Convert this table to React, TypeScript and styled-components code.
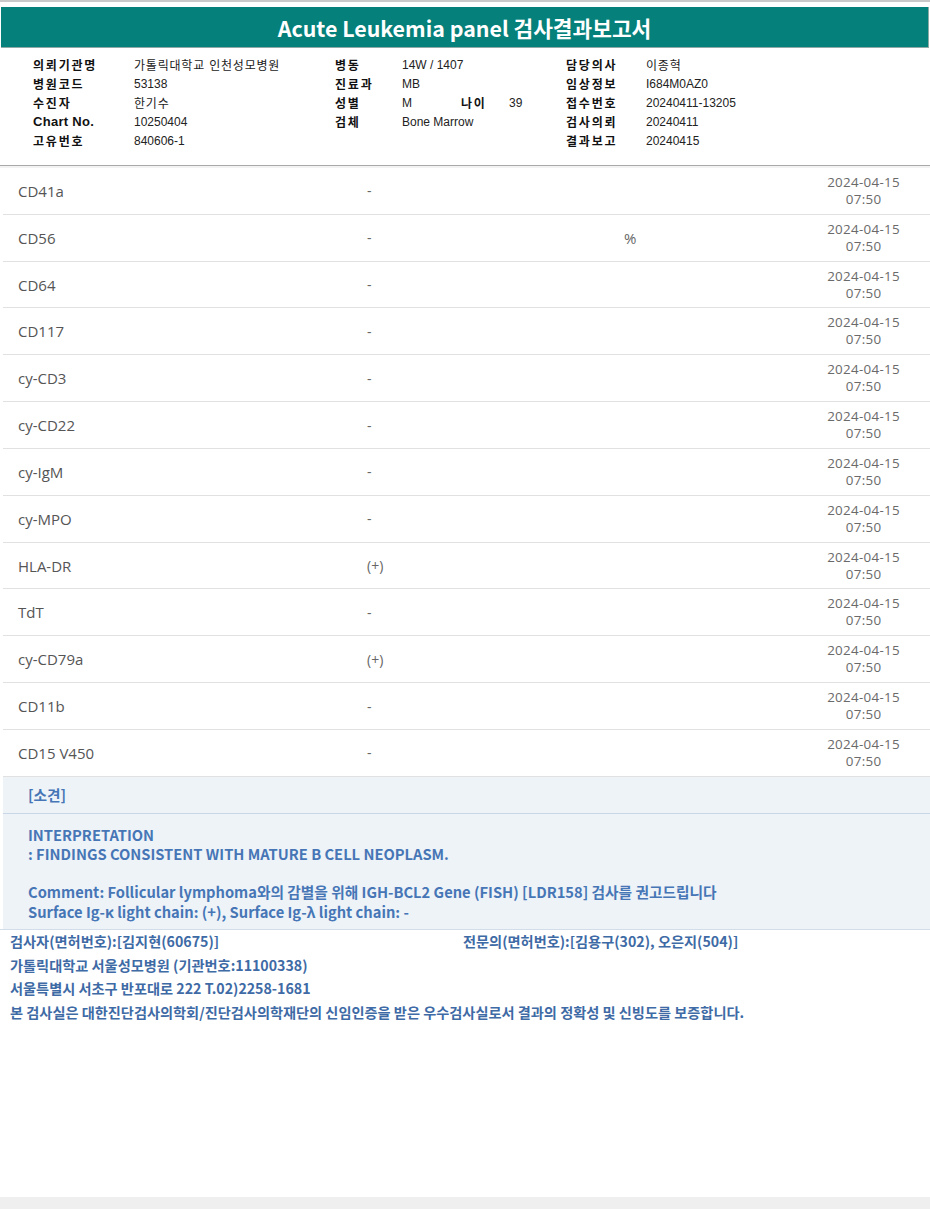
import styled, { createGlobalStyle } from 'styled-components';

const GlobalStyle = createGlobalStyle`
  html, body {
    margin: 0;
    padding: 0;
    background: #efefef;
  }
  * { box-sizing: border-box; }
`;

const KR = `'Noto Sans CJK KR', 'Liberation Sans', sans-serif`;
const OPEN = `'Open Sans', 'Noto Sans CJK KR', sans-serif`;

const Page = styled.div`
  width: 930px;
  height: 1197px;
  background: white;
  border-top: 2px solid #c9c9c9;
  padding-top: 5px;
`;

const TitleBar = styled.div`
  height: 41px;
  margin-left: 1px;
  margin-right: 1px;
  background: #05807a;
  border-right: 1px solid #8fa9a7;
  border-bottom: 1px solid #8fa9a7;
  display: flex;
  align-items: center;
  justify-content: center;
  color: white;
  font-family: ${KR};
  font-weight: 700;
  font-size: 21.4px;
`;

const Info = styled.div`
  display: grid;
  grid-template-columns: 101px 201px 67px 59px 48px 57px 80px 1fr;
  grid-auto-rows: 19px;
  align-items: center;
  padding: 7px 0 15px 33px;
  border-bottom: 1px solid #a9a9a9;
  color: #111;
`;

const Label = styled.div<{ $latin?: boolean }>`
  font-family: ${p => (p.$latin ? `'Liberation Sans', 'Noto Sans CJK KR', sans-serif` : KR)};
  font-weight: 700;
  font-size: ${p => (p.$latin ? '13px' : '12px')};
  letter-spacing: ${p => (p.$latin ? '0.3px' : '1.8px')};
  white-space: nowrap;
`;

const Value = styled.div<{ $span?: number; $kr?: boolean }>`
  font-family: 'Liberation Sans', 'Noto Sans CJK KR', sans-serif;
  font-size: 12px;
  letter-spacing: ${p => (p.$kr ? '0.8px' : '0')};
  color: #222;
  white-space: nowrap;
  grid-column: span ${p => p.$span ?? 1};
`;

const Gap = styled.div`
  height: 2px;
  background: #f3f3f3;
`;

const Table = styled.div`
  margin-left: 3px;
`;

const Row = styled.div`
  display: grid;
  grid-template-columns: 349px 257px 1fr auto;
  align-items: center;
  height: 46.83px;
  padding: 0 30px 0 15px;
  border-bottom: 1px solid #e1e1e1;
  background: white;
  font-family: ${OPEN};
  color: #555;
`;

const Name = styled.div`
  font-size: 15px;
`;

const Result = styled.div`
  font-size: 14px;
  color: #666;
`;

const Unit = styled.div`
  font-size: 15px;
  color: #666;
`;

const DateCell = styled.div`
  display: flex;
  flex-direction: column;
  align-items: center;
  font-size: 13.4px;
  line-height: 17px;
  letter-spacing: 0.3px;
  color: #6a6a6a;
`;

const Findings = styled.div`
  margin-left: 3px;
  background: #eef3f8;
  font-family: ${KR};
  font-weight: 700;
  color: #4676b6;
  font-size: 14.7px;
`;

const FindingsHead = styled.div`
  height: 37px;
  display: flex;
  align-items: center;
  padding-left: 25px;
  border-bottom: 1px solid #c9d6e6;
`;

const FindingsBody = styled.div`
  padding: 11px 0 8px 25px;
  line-height: 19.3px;
`;

const Spacer = styled.div`
  height: 19px;
`;

const Footer = styled.div`
  border-top: 1px solid #d3dde9;
  padding-left: 10px;
  font-family: ${KR};
  font-weight: 700;
  font-size: 14.2px;
  line-height: 23.6px;
  color: #3e6aa5;
`;

const FooterRow = styled.div`
  display: grid;
  grid-template-columns: 453px 1fr;
`;

const rows: { name: string; result: string; unit?: string }[] = [
  { name: 'CD41a', result: '-' },
  { name: 'CD56', result: '-', unit: '%' },
  { name: 'CD64', result: '-' },
  { name: 'CD117', result: '-' },
  { name: 'cy-CD3', result: '-' },
  { name: 'cy-CD22', result: '-' },
  { name: 'cy-IgM', result: '-' },
  { name: 'cy-MPO', result: '-' },
  { name: 'HLA-DR', result: '(+)' },
  { name: 'TdT', result: '-' },
  { name: 'cy-CD79a', result: '(+)' },
  { name: 'CD11b', result: '-' },
  { name: 'CD15 V450', result: '-' },
];

export default function App() {
  return (
    <Page>
      <GlobalStyle />
      <TitleBar>Acute Leukemia panel 검사결과보고서</TitleBar>

      <Info>
        <Label>의뢰기관명</Label>
        <Value $kr>가톨릭대학교 인천성모병원</Value>
        <Label>병동</Label>
        <Value $span={3}>14W / 1407</Value>
        <Label>담당의사</Label>
        <Value $kr>이종혁</Value>

        <Label>병원코드</Label>
        <Value>53138</Value>
        <Label>진료과</Label>
        <Value $span={3}>MB</Value>
        <Label>임상정보</Label>
        <Value>I684M0AZ0</Value>

        <Label>수진자</Label>
        <Value $kr>한기수</Value>
        <Label>성별</Label>
        <Value>M</Value>
        <Label>나이</Label>
        <Value>39</Value>
        <Label>접수번호</Label>
        <Value>20240411-13205</Value>

        <Label $latin>Chart No.</Label>
        <Value>10250404</Value>
        <Label>검체</Label>
        <Value $span={3}>Bone Marrow</Value>
        <Label>검사의뢰</Label>
        <Value>20240411</Value>

        <Label>고유번호</Label>
        <Value $span={5}>840606-1</Value>
        <Label>결과보고</Label>
        <Value>20240415</Value>
      </Info>

      <Gap />

      <Table>
        {rows.map(r => (
          <Row key={r.name}>
            <Name>{r.name}</Name>
            <Result>{r.result}</Result>
            <Unit>{r.unit ?? ''}</Unit>
            <DateCell>
              <span>2024-04-15</span>
              <span>07:50</span>
            </DateCell>
          </Row>
        ))}
      </Table>

      <Findings>
        <FindingsHead>[소견]</FindingsHead>
        <FindingsBody>
          <div>INTERPRETATION</div>
          <div>: FINDINGS CONSISTENT WITH MATURE B CELL NEOPLASM.</div>
          <Spacer />
          <div>Comment: Follicular lymphoma와의 감별을 위해 IGH-BCL2 Gene (FISH) [LDR158] 검사를 권고드립니다</div>
          <div>Surface Ig-κ light chain: (+), Surface Ig-λ light chain: -</div>
        </FindingsBody>
      </Findings>

      <Footer>
        <FooterRow>
          <div>검사자(면허번호):[김지현(60675)]</div>
          <div>전문의(면허번호):[김용구(302), 오은지(504)]</div>
        </FooterRow>
        <div>가톨릭대학교 서울성모병원 (기관번호:11100338)</div>
        <div>서울특별시 서초구 반포대로 222 T.02)2258-1681</div>
        <div>본 검사실은 대한진단검사의학회/진단검사의학재단의 신임인증을 받은 우수검사실로서 결과의 정확성 및 신빙도를 보증합니다.</div>
      </Footer>
    </Page>
  );
}
